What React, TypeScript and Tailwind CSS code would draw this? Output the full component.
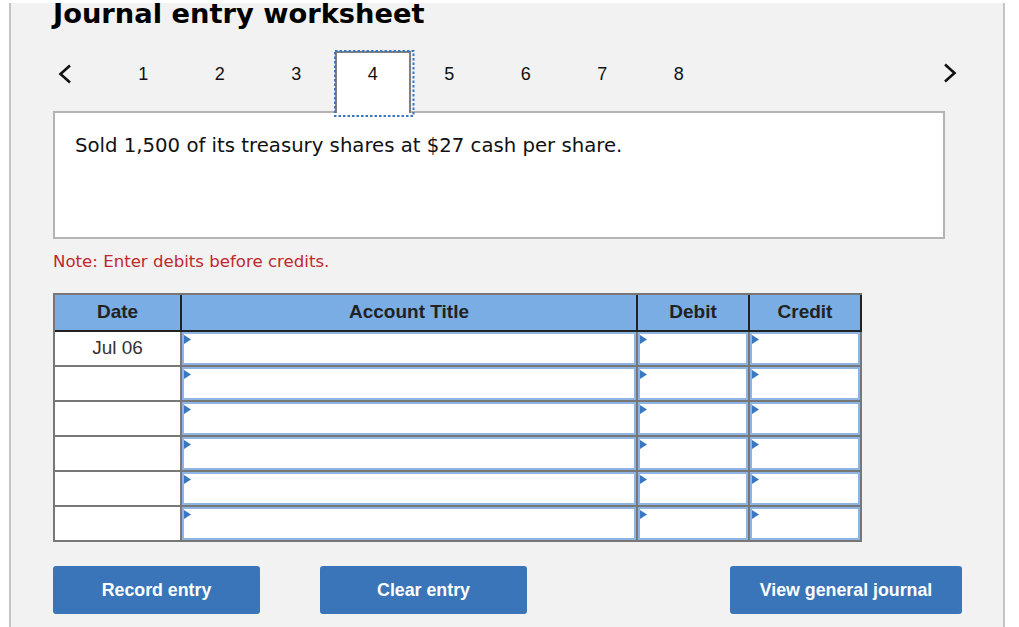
import React from "react";

const verdana = { fontFamily: '"DejaVu Sans", Verdana, sans-serif' };
const arial = { fontFamily: '"Liberation Sans", Arial, sans-serif' };

function Marker() {
  return (
    <svg className="absolute left-0 top-[1px]" width="7" height="9" viewBox="0 0 7 9">
      <polygon points="0,0 7,4.5 0,9" fill="#3a78c2" />
    </svg>
  );
}

function InputCell({ w }: { w: string }) {
  return (
    <div className={`${w} h-[35px] border-r-2 border-b-2 border-[#777777] bg-white`}>
      <div className="relative h-full w-full border-2 border-[#8db4e2] bg-white">
        <Marker />
      </div>
    </div>
  );
}

function Chevron({ dir }: { dir: "l" | "r" }) {
  return (
    <svg width="14" height="20" viewBox="0 0 14 20">
      <polyline
        points={dir === "l" ? "12,1.5 2.5,10 12,18.5" : "2,1.5 11.5,10 2,18.5"}
        fill="none"
        stroke="#111"
        strokeWidth="2.6"
      />
    </svg>
  );
}

export default function App() {
  const tabs = [1, 2, 3, 4, 5, 6, 7, 8];
  const rows = [0, 1, 2, 3, 4, 5];
  return (
    <div className="w-[1019px] h-[627px] bg-white pt-[3px] pl-[9px] overflow-hidden">
      <div className="w-[996px] h-[624px] bg-[#f2f2f2] border-x-2 border-[#c4c4c4] pl-[42px] overflow-hidden">
        <h1
          className="-mt-[3px] text-[27.3px] leading-[27px] font-bold text-black whitespace-nowrap"
          style={verdana}
        >
          Journal entry worksheet
        </h1>

        <div className="mt-[24px] flex items-start h-[62px] w-[909px]" style={arial}>
          <div className="w-[24px] h-[62px] flex justify-center pt-[13px]">
            <Chevron dir="l" />
          </div>
          <div className="ml-[28px] flex">
            {tabs.map((t) =>
              t === 4 ? (
                <div
                  key={t}
                  className="relative z-10 w-[76.5px] h-[62px] border-2 border-b-0 border-[#808080] bg-white pt-[11px] text-center text-[18px] leading-[20px] text-[#111]"
                >
                  {t}
                  <svg
                    className="absolute -left-[3px] -top-[3px] overflow-visible"
                    width="80.5"
                    height="67"
                    viewBox="0 0 80.5 67"
                  >
                    <rect
                      x="1"
                      y="1"
                      width="78.5"
                      height="65"
                      fill="none"
                      stroke="#3b76c0"
                      strokeWidth="2"
                      strokeDasharray="2.5 2"
                    />
                  </svg>
                </div>
              ) : (
                <div
                  key={t}
                  className="w-[76.5px] h-[62px] border-2 border-transparent pt-[11px] text-center text-[18px] leading-[20px] text-[#111]"
                >
                  {t}
                </div>
              )
            )}
          </div>
          <div className="ml-auto w-[24px] h-[62px] flex justify-center pt-[12px]">
            <Chevron dir="r" />
          </div>
        </div>

        <div
          className="-mt-[2px] w-[892px] h-[128px] border-2 border-[#b4b4b4] bg-white pl-[20px] pt-[21px] text-[19.7px] leading-[24px] text-[#111]"
          style={verdana}
        >
          Sold 1,500 of its treasury shares at $27 cash per share.
        </div>

        <p className="mt-[13px] text-[16.6px] leading-[20px] text-[#c0282d]" style={verdana}>
          Note: Enter debits before credits.
        </p>

        <div className="mt-[21px] w-[809px] border-l-2 border-t-2 border-[#777777]" style={arial}>
          <div className="flex bg-[#79ade4] text-[19px] font-bold text-[#222]">
            <div className="w-[127px] h-[37px] border-r-2 border-b-2 border-[#222] flex items-center justify-center">Date</div>
            <div className="w-[456px] h-[37px] border-r-2 border-b-2 border-[#222] flex items-center justify-center">Account Title</div>
            <div className="w-[112px] h-[37px] border-r-2 border-b-2 border-[#222] flex items-center justify-center">Debit</div>
            <div className="w-[112px] h-[37px] border-r-2 border-b-2 border-[#222] flex items-center justify-center">Credit</div>
          </div>
          {rows.map((r) => (
            <div key={r} className="flex">
              <div className="w-[127px] h-[35px] border-r-2 border-b-2 border-[#777777] bg-white flex items-center justify-center text-[19px] text-[#333]">
                {r === 0 ? "Jul 06" : ""}
              </div>
              <InputCell w="w-[456px]" />
              <InputCell w="w-[112px]" />
              <InputCell w="w-[112px]" />
            </div>
          ))}
        </div>

        <div className="mt-[24px] flex w-[909px]" style={arial}>
          <button className="w-[207px] h-[48px] rounded-[3px] bg-[#3a75b9] text-white font-bold text-[17.8px]">
            Record entry
          </button>
          <button className="ml-[60px] w-[207px] h-[48px] rounded-[3px] bg-[#3a75b9] text-white font-bold text-[17.8px]">
            Clear entry
          </button>
          <button className="ml-auto w-[232px] h-[48px] rounded-[3px] bg-[#3a75b9] text-white font-bold text-[17.8px]">
            View general journal
          </button>
        </div>
      </div>
    </div>
  );
}
